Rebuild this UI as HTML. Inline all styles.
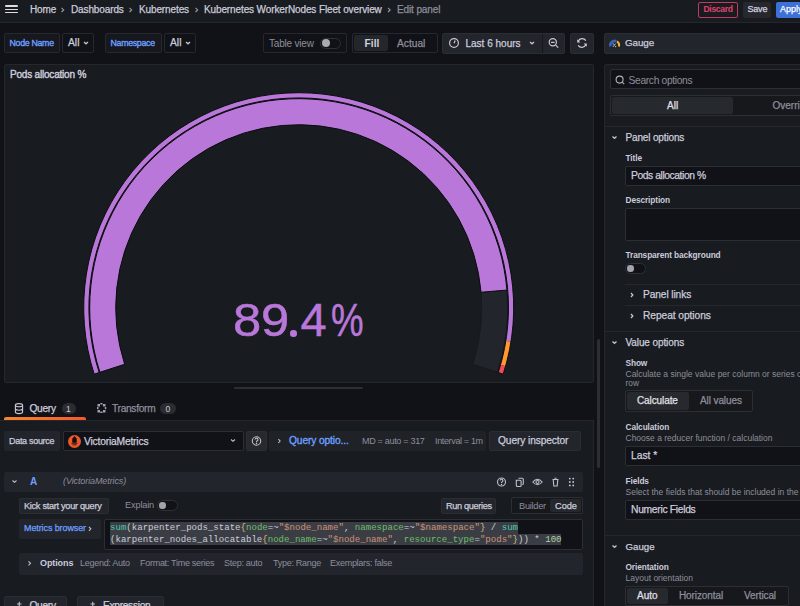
<!DOCTYPE html>
<html><head><meta charset="utf-8">
<style>
*{box-sizing:border-box;margin:0;padding:0}
html,body{width:800px;height:606px;overflow:hidden;background:#111217;font-family:"Liberation Sans",sans-serif;color:#ccccdc}
.a{position:absolute}
.t{position:absolute;white-space:nowrap;line-height:1}
.m{-webkit-text-stroke:0.25px currentColor}
.s{color:#8e8e9b}
.box{position:absolute;border:1px solid #26282d;border-radius:2px}
.btn2{position:absolute;background:#22252b;border:1px solid #2a2d32;border-radius:2px}
svg.i{position:absolute;overflow:visible}
</style></head><body>

<!-- ============ TOP BAR ============ -->
<div class="a" style="left:0;top:0;width:800px;height:23px;background:#181b1f;border-bottom:1px solid #25272c"></div>
<div class="a" style="left:5px;top:5.3px;width:13px;height:1.7px;background:#dcdce6;border-radius:1px"></div>
<div class="a" style="left:5px;top:8.5px;width:13px;height:1.7px;background:#dcdce6;border-radius:1px"></div>
<div class="a" style="left:5px;top:11.8px;width:13px;height:1.7px;background:#dcdce6;border-radius:1px"></div>
<div class="t m" style="left:30px;top:4.7px;font-size:10px;letter-spacing:-0.12px">Home</div>
<div class="t m" style="left:71px;top:4.7px;font-size:10px;letter-spacing:-0.12px">Dashboards</div>
<div class="t m" style="left:139px;top:4.7px;font-size:10px;letter-spacing:-0.12px">Kubernetes</div>
<div class="t m" style="left:204px;top:4.7px;font-size:10px;letter-spacing:-0.12px">Kubernetes WorkerNodes Fleet overview</div>
<div class="t m s" style="left:397px;top:4.7px;font-size:10px;letter-spacing:-0.12px">Edit panel</div>
<svg class="i" style="left:0;top:0" width="800" height="22"><g fill="none" stroke="#9a9aa6" stroke-width="1.1"><path d="M61.5 7.8l2.2 2.1-2.2 2.1M129.5 7.8l2.2 2.1-2.2 2.1M195.5 7.8l2.2 2.1-2.2 2.1M388 7.8l2.2 2.1-2.2 2.1"/></g></svg>

<div class="a" style="left:698px;top:1.5px;width:40px;height:16px;border:1px solid #c23a61;border-radius:2px"></div>
<div class="t" style="left:703.5px;top:5px;font-size:8.6px;font-weight:bold;color:#e0426f;letter-spacing:-0.35px">Discard</div>
<div class="a" style="left:743px;top:1.5px;width:28px;height:16px;background:#26282e;border-radius:2px"></div>
<div class="t m" style="left:747.5px;top:5px;font-size:9px;letter-spacing:-0.2px;color:#d5d5e0">Save</div>
<div class="a" style="left:776px;top:1.5px;width:30px;height:16px;background:#3d71d9;border-radius:2px"></div>
<div class="t m" style="left:780px;top:5px;font-size:9px;color:#fff">Apply</div>

<!-- ============ TOOLBAR ============ -->
<div class="box" style="left:4px;top:33px;width:56px;height:20px;background:#16181d"></div>
<div class="t m" style="left:9.5px;top:39px;font-size:8.8px;letter-spacing:-0.3px;color:#6e9fff;-webkit-text-stroke:0.35px #6e9fff">Node Name</div>
<div class="box" style="left:62px;top:33px;width:32px;height:20px;background:#111217"></div>
<div class="t m" style="left:68px;top:38px;font-size:10.3px">All</div>

<div class="box" style="left:105px;top:33px;width:57px;height:20px;background:#16181d"></div>
<div class="t m" style="left:110.5px;top:39px;font-size:8.8px;letter-spacing:-0.3px;color:#6e9fff;-webkit-text-stroke:0.35px #6e9fff">Namespace</div>
<div class="box" style="left:164px;top:33px;width:32px;height:20px;background:#111217"></div>
<div class="t m" style="left:170px;top:38px;font-size:10.3px">All</div>

<div class="box" style="left:263px;top:33px;width:84px;height:20px;background:#111217"></div>
<div class="t s" style="left:269px;top:38.7px;font-size:10px;letter-spacing:-0.2px">Table view</div>
<div class="a" style="left:320px;top:37.5px;width:21px;height:11px;border:1px solid #2e3036;border-radius:6px;background:#111217"></div>
<div class="a" style="left:321.8px;top:39.2px;width:8px;height:8px;border-radius:50%;background:#a9aab3"></div>

<div class="box" style="left:352px;top:33px;width:86px;height:20px;background:#111217"></div>
<div class="a" style="left:354px;top:35px;width:34px;height:16px;background:#23262b;border-radius:2px"></div>
<div class="t" style="left:364.5px;top:38.7px;font-size:10.3px;font-weight:bold;color:#d0d0dc">Fill</div>
<div class="t s m" style="left:397px;top:38.7px;font-size:10.2px">Actual</div>

<div class="btn2" style="left:442px;top:33px;width:123px;height:21px"></div>
<div class="a" style="left:542px;top:34px;width:1px;height:19px;background:#16181c"></div>
<svg class="i" style="left:0;top:0" width="800" height="60"><g fill="none" stroke="#c8c8d4" stroke-width="1.2">
<circle cx="454" cy="43" r="4.4"/><path d="M455.2 40.6l-1.2 2.6"/>
<circle cx="552.8" cy="42.3" r="3.6"/><path d="M551 42.3h3.6M555.6 45.1l2.6 2.6"/></g></svg>
<div class="t m" style="left:465.5px;top:38.7px;font-size:10px">Last 6 hours</div>
<div class="btn2" style="left:570px;top:33px;width:24px;height:21px"></div>
<svg class="i" style="left:0;top:0" width="800" height="60"><g transform="translate(1164 0) scale(-1 1)"><g fill="none" stroke="#c8c8d4" stroke-width="1.2">
<path d="M578.2 40.6a4.3 4.3 0 0 1 7.6 0.6M585.8 45.4a4.3 4.3 0 0 1 -7.6 -0.6"/></g>
<path d="M586.8 39.2v3.2h-3.2z M577.2 46.8v-3.2h3.2z" fill="#c8c8d4"/></g></svg>
<div class="btn2" style="left:604px;top:33px;width:200px;height:21px"></div>
<svg class="i" style="left:0;top:0" width="800" height="60">
<path d="M610.45 46.44A4.4 4.4 0 0 1 616.20 41.17" fill="none" stroke="#3565b8" stroke-width="2.6"/>
<path d="M616.90 41.49A4.4 4.4 0 0 1 618.95 46.44" fill="none" stroke="#f2b233" stroke-width="2"/>
<path d="M613 46.8l2.6-3.2" stroke="#c9d3ee" stroke-width="1"/><circle cx="613.2" cy="43.9" r="0.7" fill="#c9d3ee"/><circle cx="615.6" cy="46.6" r="0.7" fill="#c9d3ee"/></svg>
<div class="t m" style="left:625px;top:37.8px;font-size:9.9px;letter-spacing:-0.1px">Gauge</div>

<svg class="i" style="left:0;top:0" width="800" height="60"><g fill="none" stroke="#c4c4d0" stroke-width="1.3"><path d="M84 42l2 1.8 2-1.8M186 42l2 1.8 2-1.8M530 42l2 1.8 2-1.8"/></g></svg>

<!-- ============ PANEL ============ -->
<div class="a" style="left:4px;top:64px;width:590px;height:319px;background:#181b1f;border:1px solid #25272c;border-radius:2px"></div>
<div class="t" style="left:10px;top:69.5px;font-size:10px;letter-spacing:-0.2px;-webkit-text-stroke:0.4px #ccccdc">Pods allocation %</div>
<svg class="a" style="left:0;top:0" width="800" height="606" viewBox="0 0 800 606"><path d="M506.95 290.07A209 209 0 0 1 497.47 372.28L472.74 364.25A183 183 0 0 0 481.05 292.26Z" fill="#22252b" stroke="#17191d" stroke-width="1"/><path d="M99.93 372.28A209 209 0 1 1 506.95 290.07L481.05 292.26A183 183 0 1 0 124.66 364.25Z" fill="#b877d9" stroke="#0c0d10" stroke-width="1"/><path d="M94.22 374.14A215 215 0 1 1 510.99 341.70L505.86 340.88A209.8 209.8 0 1 0 99.17 372.53Z" fill="#b877d9" stroke="none" stroke-width="1"/><path d="M510.99 341.70A215 215 0 0 1 505.58 366.24L500.57 364.82A209.8 209.8 0 0 0 505.86 340.88Z" fill="#ff9830" stroke="none" stroke-width="1"/><path d="M505.58 366.24A215 215 0 0 1 503.18 374.14L498.23 372.53A209.8 209.8 0 0 0 500.57 364.82Z" fill="#f2495c" stroke="none" stroke-width="1"/><path d="M94.22 374.14A215 215 0 1 1 503.18 374.14L498.23 372.53A209.8 209.8 0 1 0 99.17 372.53Z" fill="none" stroke="#0c0d10" stroke-width="1"/></svg>
<div class="a" style="left:0;top:0;color:#b877d9;font-size:47px;-webkit-text-stroke:0.5px #b877d9">
<div class="t" style="left:232.7px;top:296px;transform:scaleX(1.08);transform-origin:0 0">8</div><div class="t" style="left:261px;top:296px;transform:scaleX(1.08);transform-origin:0 0">9</div><div class="a" style="left:290px;top:330.4px;width:6.6px;height:6.6px;border-radius:50%;background:#b877d9"></div><div class="t" style="left:300.5px;top:296px">4</div><div class="t" style="left:331px;top:296px;transform:scaleX(0.78);transform-origin:0 0">%</div></div>

<!-- ============ SPLITTER + TABS ============ -->
<div class="a" style="left:234px;top:387px;width:129px;height:2.3px;background:#2c2e34;border-radius:1px"></div>
<div class="a" style="left:597.2px;top:339px;width:2.8px;height:129px;background:#2c2e34;border-radius:2px"></div>
<svg class="i" style="left:0;top:0" width="800" height="606">
<g fill="none" stroke="#c8c8d4" stroke-width="1.1">
<ellipse cx="19" cy="405.2" rx="3.6" ry="1.6"/>
<path d="M15.4 405.2v6.8a3.6 1.6 0 0 0 7.2 0v-6.8M15.4 408.6a3.6 1.6 0 0 0 7.2 0"/>
</g>
<g fill="#a0a0ac"><rect x="97.5" y="404" width="2.5" height="2.5"/><rect x="103" y="404" width="2.5" height="2.5"/><rect x="97.5" y="410" width="2.5" height="2.5"/><rect x="103" y="410" width="2.5" height="2.5"/><rect x="100.3" y="403" width="2.2" height="1.5"/><rect x="100.3" y="411.5" width="2.2" height="1.5"/><rect x="97" y="407" width="1.5" height="2.2"/><rect x="104.8" y="407" width="1.5" height="2.2"/></g>
</svg>
<div class="t m" style="left:29.5px;top:403.5px;font-size:10.2px;letter-spacing:-0.3px">Query</div>
<div class="a" style="left:61.5px;top:403px;width:14px;height:11px;border-radius:6px;background:#2a2c31"></div>
<div class="t" style="left:66px;top:404.5px;font-size:8.6px;color:#c8c8d4">1</div>
<div class="t m s" style="left:112px;top:403.5px;font-size:10.2px;letter-spacing:-0.3px">Transform</div>
<div class="a" style="left:160px;top:403px;width:16px;height:11px;border-radius:6px;background:#2a2c31"></div>
<div class="t" style="left:165.5px;top:404.5px;font-size:8.6px;color:#c8c8d4">0</div>
<div class="a" style="left:4px;top:417px;width:82px;height:3px;background:linear-gradient(90deg,#f7862c,#f2592f);border-radius:2px 2px 0 0"></div>

<!-- ============ QUERY CONTENT ============ -->
<div class="a" style="left:0;top:420px;width:594px;height:186px;background:#181b1f;border-top:1px solid #25272c;border-right:1px solid #25272c"></div>
<div class="a" style="left:4px;top:431px;width:56px;height:20px;background:#22252b;border-radius:2px"></div>
<div class="t m" style="left:9px;top:437px;font-size:9px;letter-spacing:-0.3px">Data source</div>
<div class="a" style="left:62.5px;top:431px;width:181px;height:20px;background:#111217;border:1px solid #2c2e34;border-radius:2px"></div>
<div class="a" style="left:68px;top:434.5px;width:13px;height:13px;border-radius:50%;background:#e9582f"></div>
<svg class="i" style="left:0;top:0" width="800" height="606"><path d="M74.5 436.5l1.8 2.2v3.6h-3.6v-3.6z M71.5 443.3h6 M72.5 444.8h4" fill="#1a0c08" stroke="#1a0c08" stroke-width="0.8"/></svg>
<div class="t m" style="left:84px;top:436.5px;font-size:10.3px;letter-spacing:-0.2px">VictoriaMetrics</div>
<div class="a" style="left:246px;top:431px;width:21px;height:20px;background:#26292e;border:1px solid #2c2e34;border-radius:2px"></div>
<div class="a" style="left:269px;top:431px;width:217px;height:20px;background:#1f2227;border-radius:2px"></div>
<div class="t m" style="left:289px;top:436px;font-size:10.2px;color:#6e9fff;letter-spacing:-0.1px;-webkit-text-stroke:0.35px #6e9fff">Query optio...</div>
<div class="t s" style="left:362px;top:437px;font-size:9px;letter-spacing:-0.3px">MD = auto = 317</div>
<div class="t s" style="left:435px;top:437px;font-size:9px;letter-spacing:-0.35px">Interval = 1m</div>
<div class="a" style="left:488.5px;top:431px;width:92px;height:20px;background:#22252b;border:1px solid #2a2d32;border-radius:2px"></div>
<div class="t m" style="left:498px;top:436px;font-size:10.2px;letter-spacing:-0.1px">Query inspector</div>

<!-- query row header -->
<div class="a" style="left:4px;top:472px;width:579px;height:20px;background:#22252b;border-radius:2px"></div>
<div class="t" style="left:30px;top:476.5px;font-size:10px;font-weight:bold;color:#6e9fff">A</div>
<div class="t s" style="left:63px;top:477px;font-size:9px;font-style:italic;letter-spacing:-0.1px">(VictoriaMetrics)</div>

<!-- body -->
<div class="a" style="left:19px;top:498px;width:90px;height:15.5px;background:#22252b;border:1px solid #2a2d32;border-radius:2px"></div>
<div class="t m" style="left:24px;top:501.5px;font-size:9.2px;letter-spacing:-0.3px">Kick start your query</div>
<div class="t s" style="left:125px;top:500.8px;font-size:9.2px;letter-spacing:-0.15px">Explain</div>
<div class="a" style="left:157px;top:500px;width:20.5px;height:10.5px;border:1px solid #2e3036;border-radius:6px;background:#111217"></div>
<div class="a" style="left:159px;top:502px;width:6.5px;height:6.5px;border-radius:50%;background:#a3a4ad"></div>
<div class="a" style="left:441px;top:498px;width:55px;height:15.5px;background:#22252b;border:1px solid #2a2d32;border-radius:2px"></div>
<div class="t m" style="left:446px;top:501.5px;font-size:9.2px;letter-spacing:-0.35px">Run queries</div>
<div class="a" style="left:511px;top:497px;width:72px;height:17px;border:1px solid #2c2e34;border-radius:2px;background:#16181c"></div>
<div class="a" style="left:550px;top:499px;width:30.5px;height:13px;background:#25282d;border-radius:2px"></div>
<div class="t s" style="left:519px;top:501.5px;font-size:9.2px;letter-spacing:-0.25px">Builder</div>
<div class="t m" style="left:555px;top:501.5px;font-size:9.2px">Code</div>

<div class="a" style="left:19px;top:518.5px;width:82px;height:20.5px;background:#22252b;border-radius:2px"></div>
<div class="t m" style="left:24px;top:524px;font-size:9px;color:#6e9fff;letter-spacing:-0.1px">Metrics browser</div>

<div class="a" style="left:104px;top:518.5px;width:479px;height:31px;background:#111217;border:1px solid #2c2e34;border-radius:2px"></div>
<div class="a" style="left:110px;top:522.2px;width:408px;height:11.7px;background:#3a3d44"></div>
<div class="a" style="left:110px;top:533.9px;width:451px;height:11.6px;background:#3a3d44"></div>
<div class="t" style="left:110px;top:522.2px;font-family:'Liberation Mono',monospace;font-size:9.07px;line-height:12px;white-space:pre;color:#ccccdc"><span style="color:#4ec9b0">sum</span>(karpenter_pods_state<span style="color:#d7ba7d">{</span><span style="color:#6cbf6a">node</span>=~<span style="color:#ce9178">"$node_name"</span>, <span style="color:#6cbf6a">namespace</span>=~<span style="color:#ce9178">"$namespace"</span><span style="color:#d7ba7d">}</span> / <span style="color:#4ec9b0">sum</span>
(karpenter_nodes_allocatable<span style="color:#d7ba7d">{</span><span style="color:#6cbf6a">node_name</span>=~<span style="color:#ce9178">"$node_name"</span>, <span style="color:#6cbf6a">resource_type</span>=<span style="color:#ce9178">"pods"</span><span style="color:#d7ba7d">}</span>)) * <span style="color:#b5cea8">100</span></div>

<div class="a" style="left:19px;top:553px;width:564px;height:22px;background:#22252b;border-radius:2px"></div>
<div class="t" style="left:40px;top:559px;font-size:9px;font-weight:bold;letter-spacing:-0.1px">Options</div>
<div class="t s" style="left:80px;top:559px;font-size:9px;letter-spacing:-0.28px">Legend: Auto</div>
<div class="t s" style="left:140px;top:559px;font-size:9px;letter-spacing:-0.28px">Format: Time series</div>
<div class="t s" style="left:224px;top:559px;font-size:9px;letter-spacing:-0.28px">Step: auto</div>
<div class="t s" style="left:273px;top:559px;font-size:9px;letter-spacing:-0.28px">Type: Range</div>
<div class="t s" style="left:330px;top:559px;font-size:9px;letter-spacing:-0.28px">Exemplars: false</div>

<div class="a" style="left:4px;top:596px;width:63px;height:20px;background:#22252b;border:1px solid #2a2d32;border-radius:2px"></div>
<div class="t m" style="left:29.5px;top:601px;font-size:10.2px;letter-spacing:-0.3px">Query</div>
<div class="a" style="left:77px;top:596px;width:87px;height:20px;background:#22252b;border:1px solid #2a2d32;border-radius:2px"></div>
<div class="t m" style="left:103px;top:601px;font-size:10.2px;letter-spacing:-0.3px">Expression</div>

<svg class="i" style="left:0;top:0" width="800" height="606">
<g fill="none" stroke="#c0c0cc" stroke-width="1.1">
<path d="M231 439.5l2 1.8 2-1.8"/>
<circle cx="256.5" cy="441" r="4.2"/><path d="M255.1 439.6a1.45 1.45 0 1 1 1.9 1.4q-.5.2-.5.8v.4"/>
<path d="M278.3 439l1.8 2-1.8 2"/>
<path d="M12.5 480.5l2 1.8 2-1.8"/>
<path d="M89 526.8l1.8 2-1.8 2"/>
<path d="M28.5 561.3l2 2-2 2"/>
<path d="M17 604h4.5M19.25 601.8v4.5M90.5 604h4.5M92.75 601.8v4.5"/>
<circle cx="501.5" cy="482" r="4"/><path d="M500.2 480.6a1.35 1.35 0 1 1 1.8 1.3q-.5.2-.5.7v.4"/>
<path d="M516.3 480.2h3.8a1 1 0 0 1 1 1v4.3a1 1 0 0 1 -1 1h-2.8a1 1 0 0 1 -1-1z M518.5 478.2h3.6a1.2 1.2 0 0 1 1.2 1.2v4.2a1 1 0 0 1 -1 1"/>
<path d="M532.8 482q4.7-5.4 9.4 0q-4.7 5.4-9.4 0z"/><circle cx="537.5" cy="482" r="1.5"/>
<path d="M552.5 479.5h6M553.2 479.5l.6 6.5h3.4l.6-6.5M554.5 478.3h2"/>
</g>
<g fill="#c8c8d4">
<circle cx="256.5" cy="443.6" r="0.75"/><circle cx="501.5" cy="484.4" r="0.7"/>
<circle cx="569.8" cy="478.6" r="0.9"/><circle cx="573.2" cy="478.6" r="0.9"/>
<circle cx="569.8" cy="482" r="0.9"/><circle cx="573.2" cy="482" r="0.9"/>
<circle cx="569.8" cy="485.4" r="0.9"/><circle cx="573.2" cy="485.4" r="0.9"/>
</g>
</svg>


<!-- ============ RIGHT PANE ============ -->
<div class="a" style="left:604px;top:64px;width:210px;height:560px;background:#181b1f;border:1px solid #25272c;border-radius:2px"></div>
<div class="a" style="left:610px;top:69px;width:200px;height:20px;background:#111217;border:1px solid #2c2e34;border-radius:2px"></div>
<svg class="i" style="left:0;top:0" width="800" height="606"><g fill="none" stroke="#b0b0bc" stroke-width="1.1"><circle cx="619.6" cy="79.6" r="3.5"/><path d="M622.2 82.2l2 2"/></g></svg>
<div class="t s" style="left:628.5px;top:76px;font-size:10.3px;letter-spacing:-0.35px">Search options</div>
<div class="a" style="left:609.5px;top:95px;width:200px;height:20.5px;border:1px solid #2c2e34;border-radius:2px;background:#16181c"></div>
<div class="a" style="left:612px;top:97px;width:121px;height:17px;background:#26292e;border-radius:2px"></div>
<div class="t m" style="left:667px;top:100.5px;font-size:10px;color:#e0e0ea">All</div>
<div class="t s m" style="left:772.5px;top:100.5px;font-size:10px">Overrides</div>
<div class="a" style="left:605px;top:126px;width:200px;height:1px;background:#25272c"></div>

<!-- Panel options -->
<div class="t m" style="left:625.5px;top:133px;font-size:10px;letter-spacing:-0.15px">Panel options</div>
<div class="t" style="left:625.5px;top:153.5px;font-size:8.3px;font-weight:bold;letter-spacing:-0.1px">Title</div>
<div class="a" style="left:625px;top:165.5px;width:190px;height:20px;background:#111217;border:1px solid #2c2e34;border-radius:2px"></div>
<div class="t m" style="left:631px;top:170.5px;font-size:10.3px;letter-spacing:-0.42px">Pods allocation %</div>
<div class="t" style="left:625.5px;top:196px;font-size:8.3px;font-weight:bold;letter-spacing:-0.1px">Description</div>
<div class="a" style="left:625px;top:208px;width:190px;height:32.5px;background:#111217;border:1px solid #2c2e34;border-radius:2px"></div>
<div class="t" style="left:625.5px;top:251px;font-size:8.3px;font-weight:bold;letter-spacing:-0.1px">Transparent background</div>
<div class="a" style="left:625px;top:263px;width:21px;height:10.5px;border:1px solid #2e3036;border-radius:6px;background:#111217"></div>
<div class="a" style="left:627px;top:265px;width:6.5px;height:6.5px;border-radius:50%;background:#a3a4ad"></div>
<div class="a" style="left:625px;top:283.5px;width:180px;height:1px;background:#25272c"></div>
<div class="t m" style="left:643px;top:290px;font-size:10.2px;letter-spacing:-0.1px">Panel links</div>
<div class="a" style="left:625px;top:305px;width:180px;height:1px;background:#25272c"></div>
<div class="t m" style="left:643px;top:311px;font-size:10.2px;letter-spacing:-0.05px">Repeat options</div>
<div class="a" style="left:605px;top:331px;width:200px;height:1px;background:#25272c"></div>

<!-- Value options -->
<div class="t m" style="left:625.5px;top:337.5px;font-size:10px;letter-spacing:-0.1px">Value options</div>
<div class="t" style="left:625.5px;top:359px;font-size:8.3px;font-weight:bold;letter-spacing:-0.1px">Show</div>
<div class="t s" style="left:625.5px;top:369.5px;font-size:8.5px;letter-spacing:0px">Calculate a single value per column or series or</div>
<div class="t s" style="left:625.5px;top:379px;font-size:8.3px">row</div>
<div class="a" style="left:625px;top:390px;width:127.5px;height:22px;border:1px solid #2c2e34;border-radius:2px;background:#16181c"></div>
<div class="a" style="left:627px;top:392px;width:62px;height:17.5px;background:#26292e;border-radius:2px"></div>
<div class="t m" style="left:637px;top:396px;font-size:10px;color:#e0e0ea;letter-spacing:-0.1px">Calculate</div>
<div class="t s m" style="left:700px;top:396px;font-size:10px;letter-spacing:-0.1px">All values</div>

<div class="t" style="left:625.5px;top:422.5px;font-size:8.3px;font-weight:bold;letter-spacing:-0.1px">Calculation</div>
<div class="t s" style="left:625.5px;top:433.5px;font-size:8.5px">Choose a reducer function / calculation</div>
<div class="a" style="left:625px;top:445.5px;width:190px;height:20px;background:#111217;border:1px solid #2c2e34;border-radius:2px"></div>
<div class="t m" style="left:631px;top:450.5px;font-size:10.3px">Last *</div>
<div class="t" style="left:625.5px;top:477px;font-size:8.3px;font-weight:bold;letter-spacing:-0.1px">Fields</div>
<div class="t s" style="left:625.5px;top:488px;font-size:8.5px">Select the fields that should be included in the</div>
<div class="a" style="left:625px;top:499.5px;width:190px;height:20px;background:#111217;border:1px solid #2c2e34;border-radius:2px"></div>
<div class="t m" style="left:631px;top:504.5px;font-size:10.3px;letter-spacing:-0.3px">Numeric Fields</div>
<div class="a" style="left:605px;top:535px;width:200px;height:1px;background:#25272c"></div>

<!-- Gauge section -->
<div class="t m" style="left:625.5px;top:541.5px;font-size:9.7px">Gauge</div>
<div class="t" style="left:625.5px;top:562.5px;font-size:8.3px;font-weight:bold;letter-spacing:-0.1px">Orientation</div>
<div class="t s" style="left:625.5px;top:573.5px;font-size:8.5px">Layout orientation</div>
<div class="a" style="left:625px;top:585.5px;width:164px;height:20px;border:1px solid #2c2e34;border-radius:2px;background:#16181c"></div>
<div class="a" style="left:627px;top:587.5px;width:41px;height:16px;background:#26292e;border-radius:2px"></div>
<div class="t m" style="left:637px;top:590.5px;font-size:10px;color:#e0e0ea">Auto</div>
<div class="t s m" style="left:679px;top:590.5px;font-size:10px;letter-spacing:-0.1px">Horizontal</div>
<div class="t s m" style="left:744px;top:590.5px;font-size:10px;letter-spacing:-0.1px">Vertical</div>

<svg class="i" style="left:0;top:0" width="800" height="606"><g fill="none" stroke="#c4c4d0" stroke-width="1.3">
<path d="M612.5 136.5l2 1.8 2-1.8M612.5 341.5l2 1.8 2-1.8M612.5 545.5l2 1.8 2-1.8M631 293l1.8 2-1.8 2M631 314l1.8 2-1.8 2"/></g></svg>


</body></html>
